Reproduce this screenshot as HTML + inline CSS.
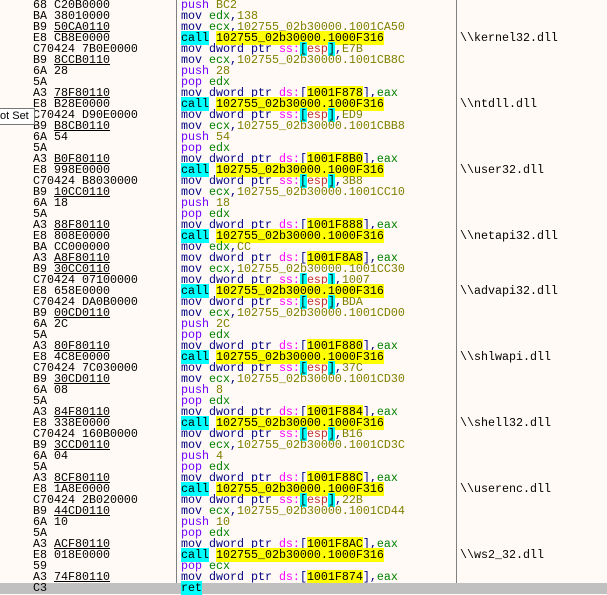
<!DOCTYPE html>
<html><head><meta charset="utf-8"><style>
body{margin:0;width:607px;height:594px;background:#fffaf5;overflow:hidden;position:relative;font-family:"Liberation Mono",monospace;font-size:11.67px;}
.row{position:relative;height:11px;line-height:11px;white-space:pre;}
.row>div{position:absolute;top:0;}
.b{left:33px;color:#000;}
.i{left:181px;color:#000080;}
.c{left:460px;color:#000;}
.sel{background:#c0c0c0;}
u{text-decoration:underline;}
.p{color:#7000ff}.r{color:#008000}.n{color:#808000}.s{color:#ff00ff}
.k{background:#00ffff;color:#000}.y{background:#ffff00;color:#000}.e{color:#c03030}
.v1{position:absolute;left:176px;top:0;width:1px;height:594px;background:#808080}
.v2{position:absolute;left:456px;top:0;width:1px;height:594px;background:#808080}
.tip{position:absolute;left:-1px;top:108px;width:34px;height:15px;background:#fff;border:1px solid #767676;font-family:"Liberation Sans",sans-serif;font-size:11px;line-height:15px;color:#000;white-space:pre;z-index:2}
</style></head><body>
<div class="v1"></div><div class="v2"></div>
<div class="row"><div class="b">68 C20B0000</div><div class="i"><span class="p">push</span> <span class="n">BC2</span></div></div>
<div class="row"><div class="b">BA 38010000</div><div class="i">mov <span class="r">edx</span>,<span class="n">138</span></div></div>
<div class="row"><div class="b">B9 <u>50CA0110</u></div><div class="i">mov <span class="r">ecx</span>,<span class="n">102755_02b30000.1001CA50</span></div></div>
<div class="row"><div class="b">E8 CB8E0000</div><div class="i"><span class="k">call</span> <span class="y">102755_02b30000.1000F316</span></div><div class="c">\\kernel32.dll</div></div>
<div class="row"><div class="b">C70424 7B0E0000</div><div class="i">mov dword ptr <span class="s">ss:</span><span class="k">[</span><span class="e">esp</span><span class="k">]</span>,<span class="n">E7B</span></div></div>
<div class="row"><div class="b">B9 <u>8CCB0110</u></div><div class="i">mov <span class="r">ecx</span>,<span class="n">102755_02b30000.1001CB8C</span></div></div>
<div class="row"><div class="b">6A 28</div><div class="i"><span class="p">push</span> <span class="n">28</span></div></div>
<div class="row"><div class="b">5A</div><div class="i"><span class="p">pop</span> <span class="r">edx</span></div></div>
<div class="row"><div class="b">A3 <u>78F80110</u></div><div class="i">mov dword ptr <span class="s">ds:</span>[<span class="y">1001F878</span>],<span class="r">eax</span></div></div>
<div class="row"><div class="b">E8 B28E0000</div><div class="i"><span class="k">call</span> <span class="y">102755_02b30000.1000F316</span></div><div class="c">\\ntdll.dll</div></div>
<div class="row"><div class="b">C70424 D90E0000</div><div class="i">mov dword ptr <span class="s">ss:</span><span class="k">[</span><span class="e">esp</span><span class="k">]</span>,<span class="n">ED9</span></div></div>
<div class="row"><div class="b">B9 <u>B8CB0110</u></div><div class="i">mov <span class="r">ecx</span>,<span class="n">102755_02b30000.1001CBB8</span></div></div>
<div class="row"><div class="b">6A 54</div><div class="i"><span class="p">push</span> <span class="n">54</span></div></div>
<div class="row"><div class="b">5A</div><div class="i"><span class="p">pop</span> <span class="r">edx</span></div></div>
<div class="row"><div class="b">A3 <u>B0F80110</u></div><div class="i">mov dword ptr <span class="s">ds:</span>[<span class="y">1001F8B0</span>],<span class="r">eax</span></div></div>
<div class="row"><div class="b">E8 998E0000</div><div class="i"><span class="k">call</span> <span class="y">102755_02b30000.1000F316</span></div><div class="c">\\user32.dll</div></div>
<div class="row"><div class="b">C70424 B8030000</div><div class="i">mov dword ptr <span class="s">ss:</span><span class="k">[</span><span class="e">esp</span><span class="k">]</span>,<span class="n">3B8</span></div></div>
<div class="row"><div class="b">B9 <u>10CC0110</u></div><div class="i">mov <span class="r">ecx</span>,<span class="n">102755_02b30000.1001CC10</span></div></div>
<div class="row"><div class="b">6A 18</div><div class="i"><span class="p">push</span> <span class="n">18</span></div></div>
<div class="row"><div class="b">5A</div><div class="i"><span class="p">pop</span> <span class="r">edx</span></div></div>
<div class="row"><div class="b">A3 <u>88F80110</u></div><div class="i">mov dword ptr <span class="s">ds:</span>[<span class="y">1001F888</span>],<span class="r">eax</span></div></div>
<div class="row"><div class="b">E8 808E0000</div><div class="i"><span class="k">call</span> <span class="y">102755_02b30000.1000F316</span></div><div class="c">\\netapi32.dll</div></div>
<div class="row"><div class="b">BA CC000000</div><div class="i">mov <span class="r">edx</span>,<span class="n">CC</span></div></div>
<div class="row"><div class="b">A3 <u>A8F80110</u></div><div class="i">mov dword ptr <span class="s">ds:</span>[<span class="y">1001F8A8</span>],<span class="r">eax</span></div></div>
<div class="row"><div class="b">B9 <u>30CC0110</u></div><div class="i">mov <span class="r">ecx</span>,<span class="n">102755_02b30000.1001CC30</span></div></div>
<div class="row"><div class="b">C70424 07100000</div><div class="i">mov dword ptr <span class="s">ss:</span><span class="k">[</span><span class="e">esp</span><span class="k">]</span>,<span class="n">1007</span></div></div>
<div class="row"><div class="b">E8 658E0000</div><div class="i"><span class="k">call</span> <span class="y">102755_02b30000.1000F316</span></div><div class="c">\\advapi32.dll</div></div>
<div class="row"><div class="b">C70424 DA0B0000</div><div class="i">mov dword ptr <span class="s">ss:</span><span class="k">[</span><span class="e">esp</span><span class="k">]</span>,<span class="n">BDA</span></div></div>
<div class="row"><div class="b">B9 <u>00CD0110</u></div><div class="i">mov <span class="r">ecx</span>,<span class="n">102755_02b30000.1001CD00</span></div></div>
<div class="row"><div class="b">6A 2C</div><div class="i"><span class="p">push</span> <span class="n">2C</span></div></div>
<div class="row"><div class="b">5A</div><div class="i"><span class="p">pop</span> <span class="r">edx</span></div></div>
<div class="row"><div class="b">A3 <u>80F80110</u></div><div class="i">mov dword ptr <span class="s">ds:</span>[<span class="y">1001F880</span>],<span class="r">eax</span></div></div>
<div class="row"><div class="b">E8 4C8E0000</div><div class="i"><span class="k">call</span> <span class="y">102755_02b30000.1000F316</span></div><div class="c">\\shlwapi.dll</div></div>
<div class="row"><div class="b">C70424 7C030000</div><div class="i">mov dword ptr <span class="s">ss:</span><span class="k">[</span><span class="e">esp</span><span class="k">]</span>,<span class="n">37C</span></div></div>
<div class="row"><div class="b">B9 <u>30CD0110</u></div><div class="i">mov <span class="r">ecx</span>,<span class="n">102755_02b30000.1001CD30</span></div></div>
<div class="row"><div class="b">6A 08</div><div class="i"><span class="p">push</span> <span class="n">8</span></div></div>
<div class="row"><div class="b">5A</div><div class="i"><span class="p">pop</span> <span class="r">edx</span></div></div>
<div class="row"><div class="b">A3 <u>84F80110</u></div><div class="i">mov dword ptr <span class="s">ds:</span>[<span class="y">1001F884</span>],<span class="r">eax</span></div></div>
<div class="row"><div class="b">E8 338E0000</div><div class="i"><span class="k">call</span> <span class="y">102755_02b30000.1000F316</span></div><div class="c">\\shell32.dll</div></div>
<div class="row"><div class="b">C70424 160B0000</div><div class="i">mov dword ptr <span class="s">ss:</span><span class="k">[</span><span class="e">esp</span><span class="k">]</span>,<span class="n">B16</span></div></div>
<div class="row"><div class="b">B9 <u>3CCD0110</u></div><div class="i">mov <span class="r">ecx</span>,<span class="n">102755_02b30000.1001CD3C</span></div></div>
<div class="row"><div class="b">6A 04</div><div class="i"><span class="p">push</span> <span class="n">4</span></div></div>
<div class="row"><div class="b">5A</div><div class="i"><span class="p">pop</span> <span class="r">edx</span></div></div>
<div class="row"><div class="b">A3 <u>8CF80110</u></div><div class="i">mov dword ptr <span class="s">ds:</span>[<span class="y">1001F88C</span>],<span class="r">eax</span></div></div>
<div class="row"><div class="b">E8 1A8E0000</div><div class="i"><span class="k">call</span> <span class="y">102755_02b30000.1000F316</span></div><div class="c">\\userenc.dll</div></div>
<div class="row"><div class="b">C70424 2B020000</div><div class="i">mov dword ptr <span class="s">ss:</span><span class="k">[</span><span class="e">esp</span><span class="k">]</span>,<span class="n">22B</span></div></div>
<div class="row"><div class="b">B9 <u>44CD0110</u></div><div class="i">mov <span class="r">ecx</span>,<span class="n">102755_02b30000.1001CD44</span></div></div>
<div class="row"><div class="b">6A 10</div><div class="i"><span class="p">push</span> <span class="n">10</span></div></div>
<div class="row"><div class="b">5A</div><div class="i"><span class="p">pop</span> <span class="r">edx</span></div></div>
<div class="row"><div class="b">A3 <u>ACF80110</u></div><div class="i">mov dword ptr <span class="s">ds:</span>[<span class="y">1001F8AC</span>],<span class="r">eax</span></div></div>
<div class="row"><div class="b">E8 018E0000</div><div class="i"><span class="k">call</span> <span class="y">102755_02b30000.1000F316</span></div><div class="c">\\ws2_32.dll</div></div>
<div class="row"><div class="b">59</div><div class="i"><span class="p">pop</span> <span class="r">ecx</span></div></div>
<div class="row"><div class="b">A3 <u>74F80110</u></div><div class="i">mov dword ptr <span class="s">ds:</span>[<span class="y">1001F874</span>],<span class="r">eax</span></div></div>
<div class="row sel"><div class="b">C3</div><div class="i"><span class="k">ret</span></div></div>
<div class="tip">ot Set</div>
</body></html>
